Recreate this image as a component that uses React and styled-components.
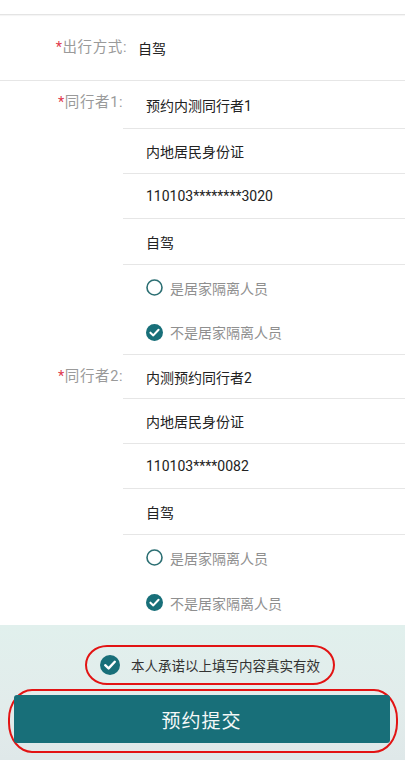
import React from 'react';
import styled, { createGlobalStyle } from 'styled-components';

const GlobalStyle = createGlobalStyle`
  html, body {
    margin: 0;
    padding: 0;
    background: #fff;
    font-family: Roboto, "Noto Sans CJK SC", sans-serif;
  }
`;

const TEAL = '#186f79';

const Page = styled.div`
  width: 405px;
  height: 760px;
  display: flex;
  flex-direction: column;
  overflow: hidden;
  background: #fff;
`;

const TopStrip = styled.div`
  height: 14px;
  border-bottom: 1px solid #e4e4e4;
  box-shadow: 0 1px 1px rgba(0, 0, 0, 0.04);
`;

const ModeRow = styled.div`
  display: flex;
  align-items: center;
  height: 65px;
  border-bottom: 1px solid #e6e6e6;
`;

const Label = styled.div`
  width: ${p => p.$width}px;
  flex: 0 0 auto;
  text-align: right;
  font-size: 14.5px;
  letter-spacing: 0.6px;
  color: #9a9a9a;
  line-height: 20px;
  align-self: ${p => (p.$top ? 'flex-start' : 'center')};
  padding-top: ${p => (p.$top ? '12px' : '0')};
  box-sizing: border-box;

  span {
    color: #e0394d;
  }
`;

const ModeValue = styled.div`
  margin-left: 11px;
  font-size: 14px;
  color: #222;
`;

const Group = styled.div`
  display: flex;
`;

const Rows = styled.div`
  flex: 1 1 auto;
  display: flex;
  flex-direction: column;
`;

const Row = styled.div`
  height: ${p => p.$h}px;
  box-sizing: border-box;
  display: flex;
  align-items: center;
  padding-left: 23px;
  border-bottom: ${p => (p.$line ? '1px solid #e6e6e6' : 'none')};
  font-size: 14px;
  color: #222;
`;

const Radio = styled.div`
  display: flex;
  align-items: center;
  gap: 7px;
  font-size: 14px;
  color: #8f8f8f;
`;

const Footer = styled.div`
  flex: 1 1 auto;
  display: flex;
  flex-direction: column;
  align-items: center;
  padding-top: 20px;
  background: linear-gradient(180deg, #e1f0ed 0%, #e2eceb 60%, #dfe8e9 100%);
`;

const PromiseRing = styled.div`
  margin-left: 15px;
  display: flex;
  align-items: center;
  gap: 11px;
  height: 40px;
  box-sizing: border-box;
  padding: 0 13px 0 13px;
  border: 2.5px solid #e21313;
  border-radius: 22px / 20px;
  font-size: 13.5px;
  color: #333;
`;

const ButtonRing = styled.div`
  margin-top: 4px;
  width: 390px;
  height: 64px;
  box-sizing: border-box;
  padding: 4px 6px 8px 4px;
  border: 2.5px solid #e21313;
  border-radius: 24px / 30px;
  display: flex;
`;

const SubmitButton = styled.button`
  flex: 1 1 auto;
  border: none;
  border-radius: 3px;
  background: ${TEAL};
  color: #f4f8f8;
  font-family: inherit;
  font-size: 19px;
  letter-spacing: 1px;
  cursor: pointer;
`;

function CheckIcon({ size = 16 }) {
  return (
    <svg width={size} height={size} viewBox="0 0 20 20">
      <circle cx="10" cy="10" r="10" fill={TEAL} />
      <path d="M5.2 10.2 L8.6 13.4 L14.8 6.8" fill="none" stroke="#fff" strokeWidth="2.4" strokeLinecap="round" strokeLinejoin="round" />
    </svg>
  );
}

function EmptyIcon() {
  return (
    <svg width="17" height="17" viewBox="0 0 17 17">
      <circle cx="8.5" cy="8.5" r="7.5" fill="none" stroke="#2c6f73" strokeWidth="1.6" />
    </svg>
  );
}

function Companion({ index, name, idNo, firstHeight }) {
  return (
    <Group>
      <Label $width={123} $top>
        <span>*</span>同行者{index}:
      </Label>
      <Rows>
        <Row $h={firstHeight} $line>{name}</Row>
        <Row $h={45} $line>内地居民身份证</Row>
        <Row $h={45} $line>{idNo}</Row>
        <Row $h={46} $line>自驾</Row>
        <Row $h={45}>
          <Radio><EmptyIcon />是居家隔离人员</Radio>
        </Row>
        <Row $h={45} $line={index === 1}>
          <Radio><CheckIcon size={17} />不是居家隔离人员</Radio>
        </Row>
      </Rows>
    </Group>
  );
}

export default function App() {
  return (
    <Page>
      <GlobalStyle />
      <TopStrip />
      <ModeRow>
        <Label $width={127}>
          <span>*</span>出行方式:
        </Label>
        <ModeValue>自驾</ModeValue>
      </ModeRow>
      <Companion index={1} name="预约内测同行者1" idNo="110103********3020" firstHeight={48} />
      <Companion index={2} name="内测预约同行者2" idNo="110103****0082" firstHeight={44} />
      <Footer>
        <PromiseRing>
          <CheckIcon size={20} />
          本人承诺以上填写内容真实有效
        </PromiseRing>
        <ButtonRing>
          <SubmitButton>预约提交</SubmitButton>
        </ButtonRing>
      </Footer>
    </Page>
  );
}
